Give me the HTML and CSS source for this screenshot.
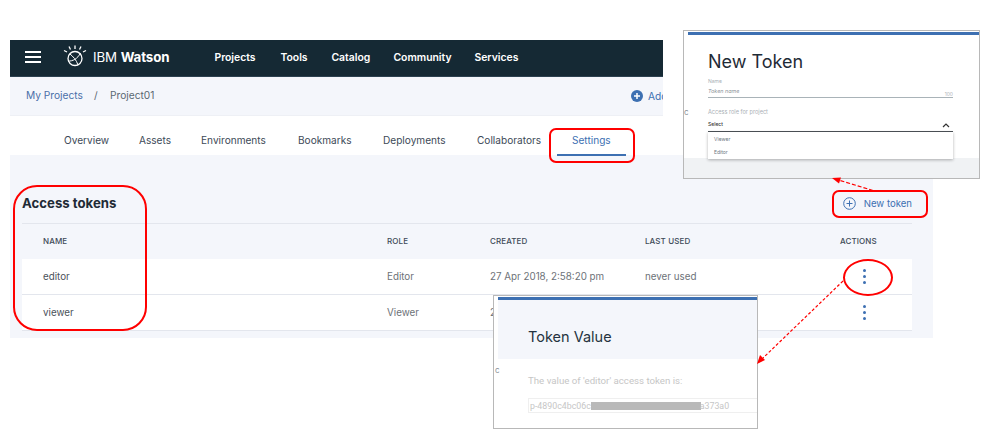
FILE: index.html
```html
<!DOCTYPE html>
<html lang="en">
<head>
<meta charset="utf-8">
<title>Access tokens</title>
<link rel="stylesheet" href="styles.css">
</head>
<body>
<div class="app">
  <header class="nav">
    <div class="burger"><i></i><i></i><i></i></div>
    <svg class="logo" width="24" height="22" viewBox="0 0 24 22" fill="none" stroke="#fff">
      <circle cx="12" cy="13.500" r="7" stroke-width="1.300"/>
      <path d="M5 16c4.500.4 9.500-2 12.500-8M7 9c3 2.500 6.500 6 8 11" stroke-width="1"/>
      <path d="M12 .5v3.500M6 1.500l1.500 3M18 1.500l-1.500 3M1 5.500l3 1.500M23 5.500l-3 1.500" stroke-width="1.300"/>
    </svg>
    <div class="brand">IBM <b>Watson</b></div>
    <nav class="menu"><span>Projects</span><span>Tools</span><span>Catalog</span><span>Community</span><span>Services</span></nav>
  </header>
  <div class="crumbs">
    <a class="crumb-link">My Projects</a><span class="crumb-sep">/</span><span class="crumb-now">Project01</span>
    <div class="add">
      <svg width="12" height="12" viewBox="0 0 12 12"><circle cx="6" cy="6" r="6" fill="#3d70b2"/><path d="M6 3v6M3 6h6" stroke="#fff" stroke-width="1.500"/></svg>
      <span>Add</span>
    </div>
  </div>
  <div class="tabs">
    <span class="tab">Overview</span><span class="tab">Assets</span><span class="tab">Environments</span><span class="tab">Bookmarks</span><span class="tab">Deployments</span><span class="tab">Collaborators</span><span class="tab active">Settings</span>
  </div>
  <main class="content">
    <div class="head">
      <h2>Access tokens</h2>
      <button class="new">
        <svg width="13" height="13" viewBox="0 0 13 13" fill="none" stroke="#3d70b2"><circle cx="6.500" cy="6.500" r="5.800"/><path d="M6.500 3.500v6M3.500 6.500h6"/></svg>
        New token
      </button>
    </div>
    <div class="row hdr"><span>NAME</span><span>ROLE</span><span>CREATED</span><span>LAST USED</span><span>ACTIONS</span></div>
    <div class="row item"><span class="nm">editor</span><span>Editor</span><span>27 Apr 2018, 2:58:20 pm</span><span>never used</span><span class="kebab"><i></i><i></i><i></i></span></div>
    <div class="row item"><span class="nm">viewer</span><span>Viewer</span><span>27 Apr 2018, 2:58:20 pm</span><span>never used</span><span class="kebab"><i></i><i></i><i></i></span></div>
  </main>
</div>

<section class="shot shot-new">
  <span class="stray stray-new">c</span>
  <div class="bar"></div>
  <div class="new-body">
    <h3>New Token</h3>
    <div class="lbl">Name</div>
    <div class="field"><em>Token name</em><span>100</span></div>
    <div class="lbl role">Access role for project</div>
    <div class="select"><span>Select</span>
      <svg width="8" height="5" viewBox="0 0 8 5" fill="none" stroke="#333" stroke-width="1.200"><path d="M1 4l3-3 3 3"/></svg>
    </div>
    <div class="drop"><div>Viewer</div><div>Editor</div></div>
  </div>
  <div class="new-foot"></div>
</section>

<section class="shot shot-value">
  <span class="stray stray-value">c</span>
  <div class="bar"></div>
  <div class="value-head"><h3>Token Value</h3></div>
  <div class="value-body">
    <p>The value of 'editor' access token is:</p>
    <div class="tok"><span>p-4890c4bc06c</span><i></i><span>a373a0</span></div>
  </div>
</section>

<div class="mark mark-settings"></div>
<div class="mark mark-tokens"></div>
<div class="mark mark-new"></div>
<div class="mark mark-kebab"></div>

<svg class="arrows" width="990" height="440" viewBox="0 0 990 440" fill="none">
  <path d="M873 190.500L840 180.500" stroke="#f00" stroke-width="1.200" stroke-dasharray="4 2"/>
  <path d="M832 178l9-.500-2 6z" fill="#f00"/>
  <path d="M843 281L763 358" stroke="#f00" stroke-width="1.200" stroke-dasharray="3 2"/>
  <path d="M757 364l3-9 5 5z" fill="#f00"/>
</svg>
</body>
</html>
```
FILE: styles.css
```css
* { box-sizing: border-box; }
html, body { margin: 0; background: #fff; }
body { position: relative; width: 990px; height: 440px; overflow: hidden; font-family: "Inter", "Liberation Sans", sans-serif; color: #3d4a57; }
.app { width: 923px; margin: 40px 0 0 10px; }
.nav { width: 653px; height: 37px; background: #152934; color: #fff; display: flex; align-items: center; border-bottom: 1px solid #2c4150; padding-bottom: 2px; }
.burger { margin-left: 15px; width: 16px; display: flex; flex-direction: column; gap: 3px; }
.burger i { display: block; height: 2px; background: #fff; }
.logo { margin-left: 22px; margin-top: -2px; }
.brand { margin-left: 6px; font-size: 13.300px; letter-spacing: -.1px; font-weight: 400; white-space: nowrap; }
.brand b { font-weight: 700; }
.menu { margin-left: 45px; display: flex; font-size: 10.400px; font-weight: 600; }
.menu span:nth-child(1) { width: 66px; }
.menu span:nth-child(2) { width: 51px; }
.menu span:nth-child(3) { width: 62px; }
.menu span:nth-child(4) { width: 81px; }
.crumbs { width: 653px; height: 39px; background: #f4f6fb; display: flex; align-items: center; font-size: 10.200px; position: relative; overflow: hidden; padding: 0 0 2px 16px; border-bottom: 1px solid #eef0f5; }
.crumb-link { color: #4a6fa8; width: 68px; }
.crumb-sep { color: #5a6872; width: 16px; }
.crumb-now { color: #5a6872; }
.add { position: absolute; left: 621px; top: 13px; display: flex; gap: 5px; align-items: center; color: #3d70b2; white-space: nowrap; }
.tabs { width: 653px; height: 39px; display: flex; font-size: 10.100px; color: #3d4a57; padding-left: 39px; align-items: flex-start; }
.tab { padding: 18px 15px 0; height: 39px; white-space: nowrap; line-height: 13px; }
.tab:nth-child(1) { width: 75px; }
.tab:nth-child(2) { width: 62px; }
.tab:nth-child(3) { width: 97px; }
.tab:nth-child(4) { width: 85px; }
.tab:nth-child(5) { width: 94px; }
.tab:nth-child(6) { width: 95px; }
.tab.active { width: 69px; color: #3d70b2; border-bottom: 2px solid #3d70b2; height: 40px; }
.content { background: #f4f6fb; height: 183px; padding: 0 21px 0 12px; }
.head { height: 69px; border-bottom: 1px solid #e3e6ed; display: flex; justify-content: space-between; align-items: center; padding-top: 28px; }
.head h2 { margin: 0; font-size: 13.200px; font-weight: 700; color: #1f2b36; }
.new { border: 0; background: none; padding: 0; font: inherit; font-size: 9.600px; color: #3d70b2; display: flex; gap: 8px; align-items: center; }
.row { display: grid; grid-template-columns: 344px 103px 155px 195px 1fr; padding-left: 21px; align-items: center; font-size: 9.800px; }
.hdr { height: 35px; padding-bottom: 2px; font-size: 8px; font-weight: 500; letter-spacing: .1px; color: #3d4a57; }
.item { height: 36px; background: #fff; border-bottom: 1px solid #e3e6ed; color: #6d7278; }
.item .nm { color: #4a5159; }
.kebab { display: flex; flex-direction: column; gap: 3px; padding-left: 23px; }
.kebab i { width: 3px; height: 3px; border-radius: 50%; background: #3d70b2; display: block; }
.shot { position: absolute; background: #fff; border: 1px solid #b8b8b8; overflow: hidden; }
.stray { position: absolute; font-size: 8px; line-height: 8px; color: #8a9197; }
.stray-new { left: 0; top: 77px; }
.stray-value { left: 1px; top: 70px; }
.bar { height: 3px; background: #3d70b2; margin-left: 4px; }
.shot-new { left: 683px; top: 30px; width: 297px; height: 149px; padding-top: 1px; }
.new-body { height: 123px; padding: 16px 26px 0 24px; position: relative; }
.new-body h3 { margin: 0 0 5px; font-size: 18px; line-height: 22px; font-weight: 400; color: #1f2b36; }
.lbl { font-size: 5px; line-height: 7px; color: #a9afb5; }
.field { margin-top: 2px; height: 11px; border-bottom: 1px solid #a9b3b8; display: flex; justify-content: space-between; font-size: 5.400px; line-height: 8px; color: #8a9197; }
.field span { padding-top: 3px; color: #b0b4b8; font-size: 5px; }
.lbl.role { margin-top: 11px; font-size: 5.600px; }
.select { margin-top: 4px; height: 12px; border-bottom: 1px solid #4d5358; display: flex; justify-content: space-between; font-size: 5px; line-height: 8px; color: #333; font-weight: 500; padding-right: 3px; }
.select svg { margin-top: 3px; }
.drop { position: absolute; left: 24px; right: 26px; top: 97px; height: 27px; background: #fff; box-shadow: 0 1px 3px rgba(0,0,0,.3); font-size: 5px; color: #6b7680; padding: 3px 6px; z-index: 1; }
.drop div { height: 13px; line-height: 8px; }
.new-foot { height: 21px; background: #f0f2f4; }
.shot-value { left: 493px; top: 295px; width: 265px; height: 134px; padding-top: 1px; }
.value-head { margin-left: 4px; height: 59px; background: #f4f6fb; padding: 27px 0 0 30px; }
.value-head h3 { margin: 0; font-size: 14.500px; font-weight: 400; line-height: 20px; color: #253340; }
.value-body { padding: 15px 0 0 34px; }
.value-body p { margin: 0; font-family: Roboto, sans-serif; font-size: 9.700px; line-height: 13px; color: #c6c6c6; }
.tok { margin-top: 11px; height: 15px; border: 1px solid #efefef; border-right: 0; font-family: Roboto, sans-serif; font-size: 8.800px; color: #c6c6c6; display: flex; align-items: center; padding-left: 1px; }
.tok i { width: 110px; height: 8px; background: #b9b9b9; margin-right: -1px; }
.mark { position: absolute; border: 2px solid #f00; border-radius: 7px; }
.mark-settings { left: 549px; top: 128px; width: 86px; height: 35px; }
.mark-tokens { left: 13px; top: 185px; width: 134px; height: 146px; border-radius: 24px; }
.mark-new { left: 832px; top: 190px; width: 96px; height: 28px; }
.mark-kebab { left: 843px; top: 259px; width: 50px; height: 37px; border-radius: 50%; }
.arrows { position: absolute; left: 0; top: 0; pointer-events: none; }
```
